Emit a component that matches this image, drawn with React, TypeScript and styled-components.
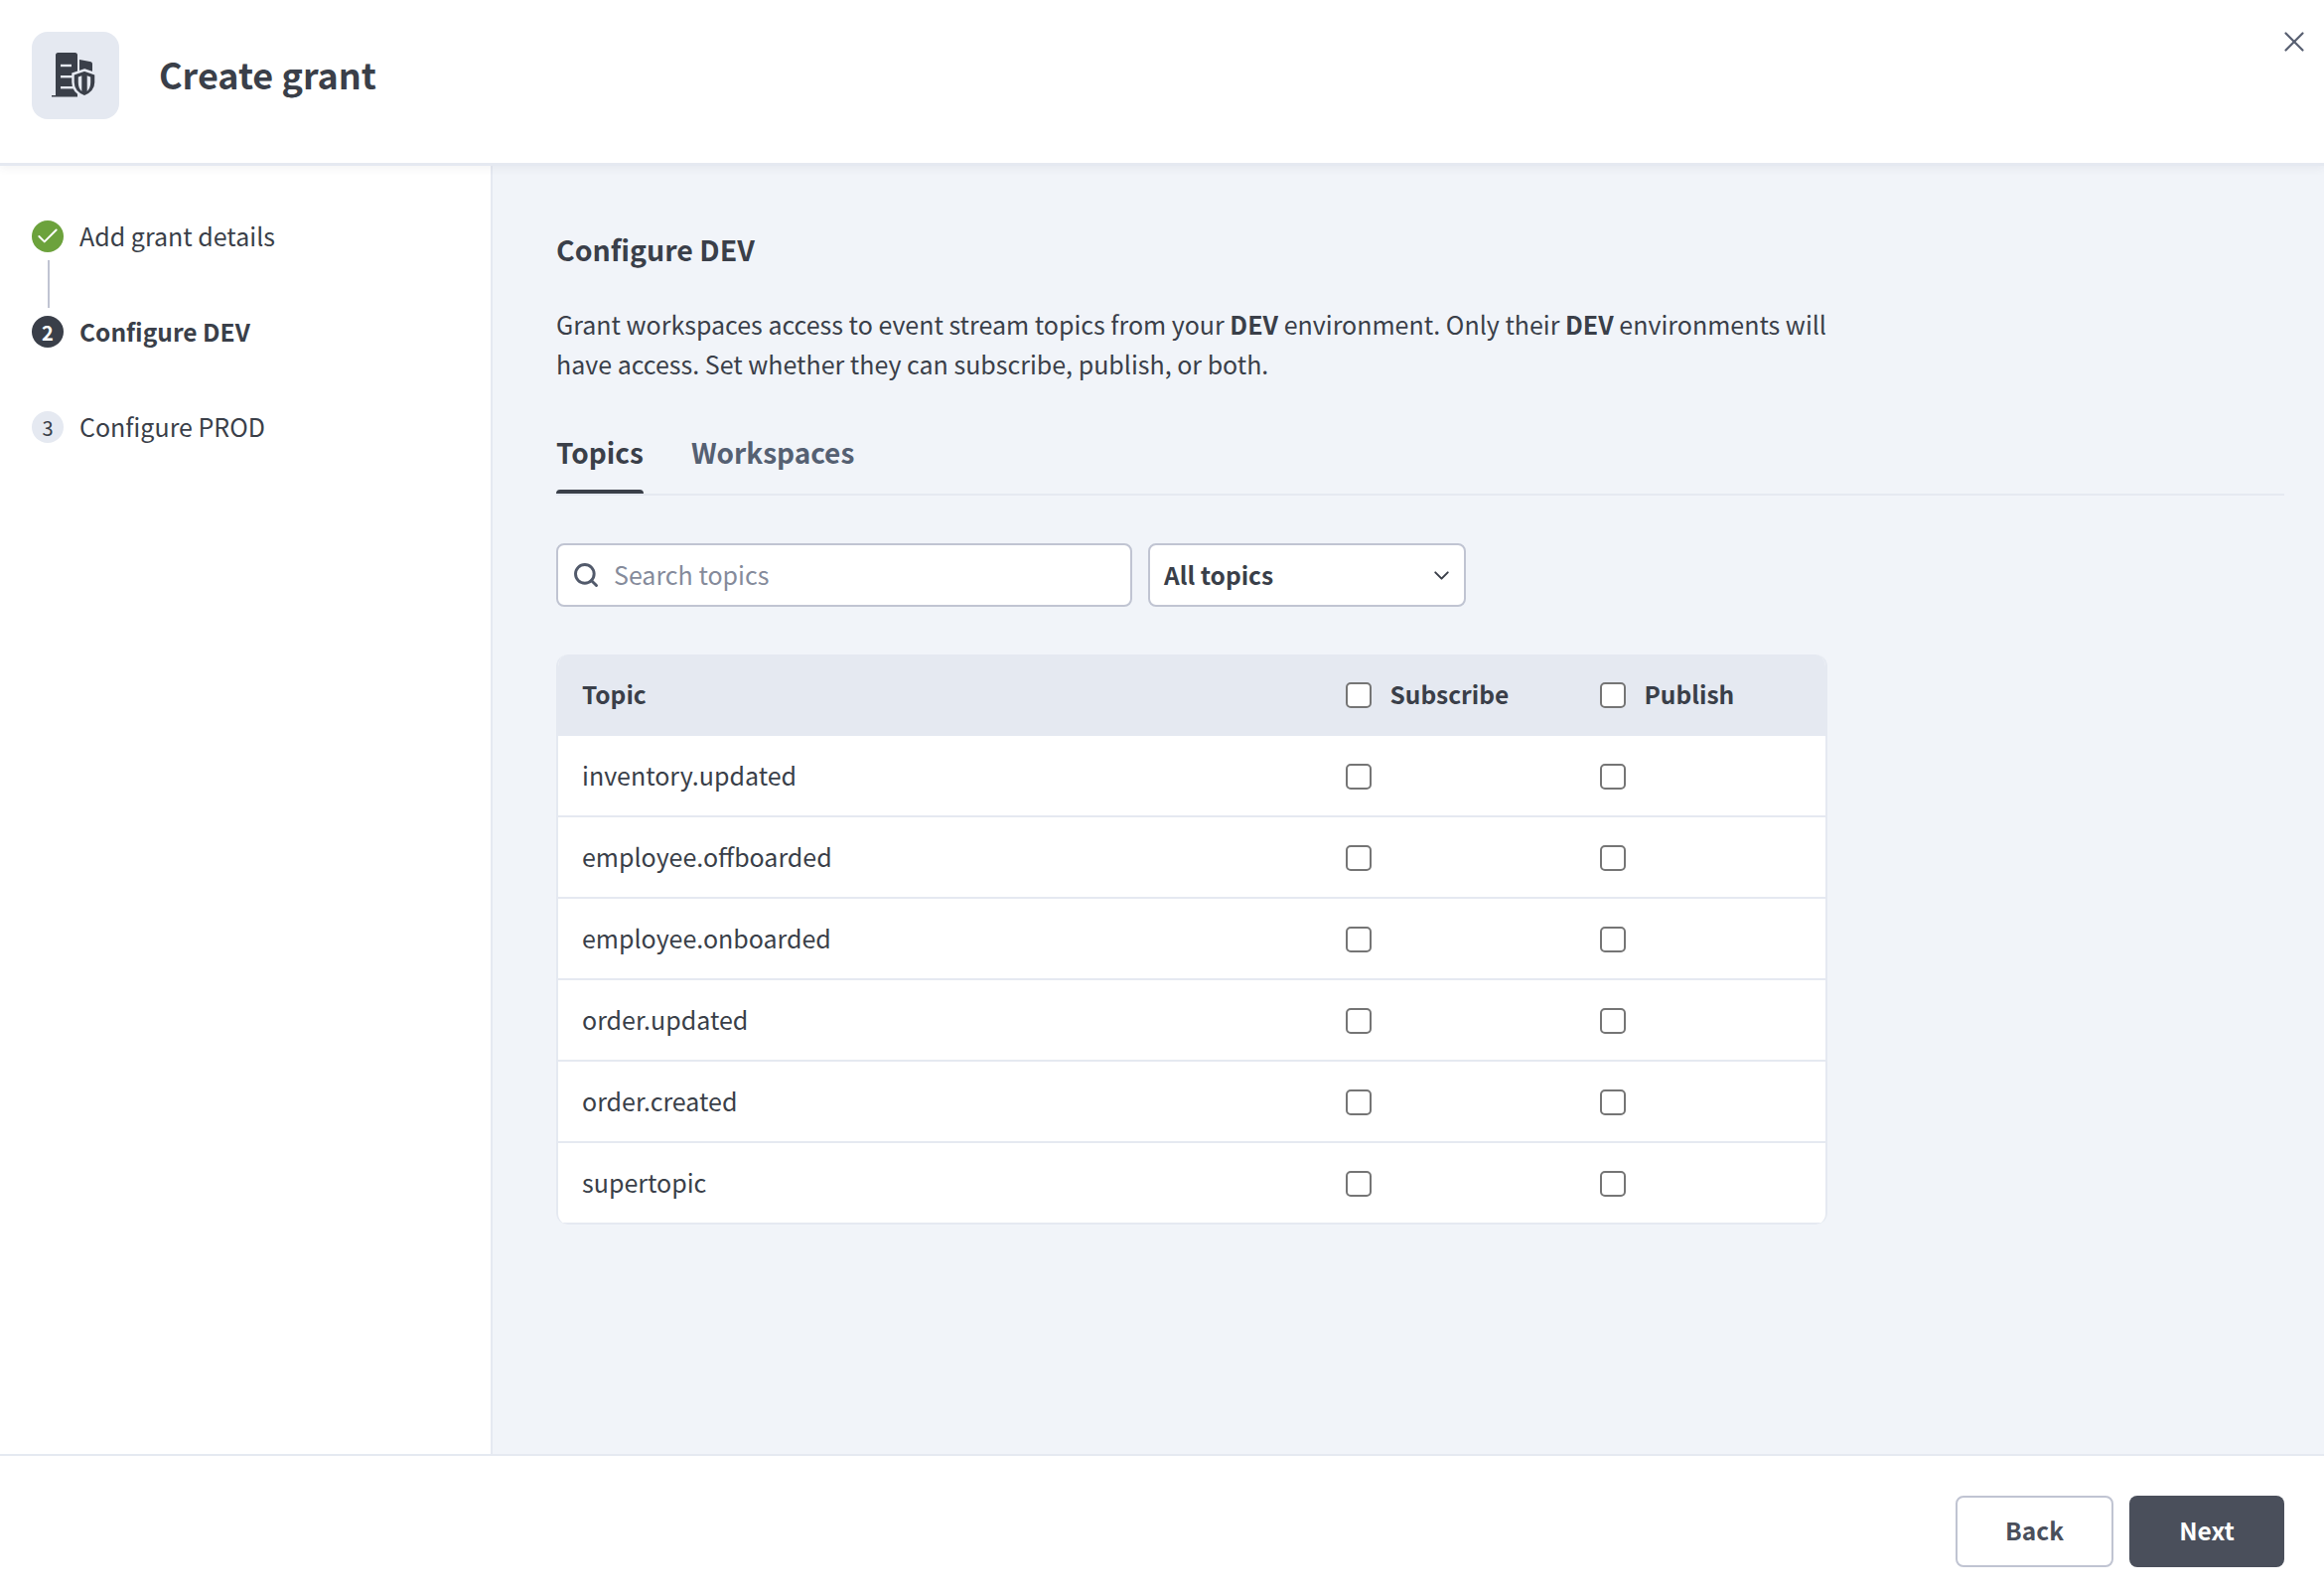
import { useState } from "react";
import styled, { createGlobalStyle } from "styled-components";
import { Check, ChevronDown, Search, X } from "lucide-react";

const GlobalStyle = createGlobalStyle`
  html, body {
    margin: 0;
    height: 100%;
    background: #ffffff;
  }
  body {
    font-family: "Noto Sans CJK SC", "Noto Sans", sans-serif;
    color: #3a3f49;
  }
  * {
    box-sizing: border-box;
  }
`;

const Page = styled.div`
  display: flex;
  flex-direction: column;
  height: 100vh;
  overflow: hidden;
`;
const Header = styled.header`
  position: relative;
  z-index: 1;
  flex: none;
  display: flex;
  align-items: center;
  gap: 40px;
  height: 167px;
  padding: 0 32px 12px;
  border-bottom: 3px solid #e5e9f1;
  box-shadow: 0 3px 8px rgba(60, 70, 90, 0.06);
`;
const IconBox = styled.div`
  display: flex;
  align-items: center;
  justify-content: center;
  width: 88px;
  height: 88px;
  border-radius: 16px;
  background: #e5e9f1;
`;
const Title = styled.h1`
  margin: 0;
  padding-bottom: 5px;
  font-size: 36px;
  line-height: 56px;
  font-weight: 700;
`;
const CloseButton = styled.button`
  position: absolute;
  top: 25px;
  right: 13px;
  display: flex;
  padding: 0;
  border: 0;
  background: none;
  color: #596072;
`;
const Body = styled.div`
  flex: 1;
  display: flex;
  min-height: 0;
`;
const Sidebar = styled.nav`
  flex: none;
  display: flex;
  flex-direction: column;
  width: 496px;
  padding: 55px 32px 0;
  border-right: 2px solid #e5e9f1;
`;
const Step = styled.div`
  display: flex;
  align-items: center;
  gap: 16px;
  height: 32px;
`;
const StepCircle = styled.span<{ $state: "done" | "active" | "todo" }>`
  flex: none;
  display: flex;
  align-items: center;
  justify-content: center;
  width: 32px;
  height: 32px;
  border-radius: 50%;
  font-size: 20px;
  font-weight: ${(p) => (p.$state === "active" ? 700 : 400)};
  background: ${(p) =>
    p.$state === "done" ? "#6ca23c" : p.$state === "active" ? "#3a3f49" : "#e5e9f1"};
  color: ${(p) => (p.$state === "todo" ? "#3a3f49" : "#ffffff")};
`;
const StepLabel = styled.span<{ $active?: boolean }>`
  padding-bottom: 2px;
  font-size: ${(p) => (p.$active ? "24.500px" : "25px")};
  font-weight: ${(p) => (p.$active ? 700 : 400)};
`;
const StepGap = styled.div<{ $line?: boolean }>`
  width: 2px;
  height: 48px;
  margin: 8px 0 8px 16px;
  background: ${(p) => (p.$line ? "#c0c4d2" : "transparent")};
`;
const Content = styled.main`
  flex: 1;
  min-width: 0;
  padding: 63px 40px 0 64px;
  background: #f1f4f9;
`;
const Heading = styled.h2`
  margin: 0;
  font-size: 28.500px;
  line-height: 42px;
  font-weight: 700;
`;
const Intro = styled.p`
  width: 1290px;
  margin: 34px 0 0;
  font-size: 25px;
  line-height: 40px;
`;
const Tabs = styled.div`
  display: flex;
  gap: 48px;
  margin-top: 44px;
  border-bottom: 2px solid #e5e9f1;
`;
const Tab = styled.button<{ $active?: boolean }>`
  position: relative;
  height: 67px;
  padding: 0 0 18px;
  border: 0;
  background: none;
  font-family: inherit;
  font-size: 28px;
  font-weight: 700;
  color: ${(p) => (p.$active ? "#3a3f49" : "#556072")};
  &::after {
    content: "";
    position: absolute;
    left: 0;
    right: 0;
    bottom: 0;
    height: 4px;
    border-radius: 4px 4px 0 0;
    background: ${(p) => (p.$active ? "#3a3f49" : "transparent")};
  }
`;
const Filters = styled.div`
  display: flex;
  gap: 16px;
  margin-top: 48px;
`;
const SearchBox = styled.label`
  display: flex;
  align-items: center;
  gap: 14px;
  width: 580px;
  height: 64px;
  padding: 0 14px;
  border: 2px solid #c0c4d2;
  border-radius: 8px;
  background: #ffffff;
  color: #525a6b;
`;
const SearchInput = styled.input`
  flex: 1;
  min-width: 0;
  padding: 0 0 2px;
  border: 0;
  outline: 0;
  background: none;
  font-family: inherit;
  font-size: 25px;
  color: #3a3f49;
  &::placeholder {
    color: #858b9b;
    opacity: 1;
  }
`;
const Select = styled.div`
  display: flex;
  align-items: center;
  justify-content: space-between;
  width: 320px;
  height: 64px;
  padding: 0 10px 0 14px;
  border: 2px solid #c0c4d2;
  border-radius: 8px;
  background: #ffffff;
  font-size: 24.500px;
  font-weight: 700;
`;
const SelectValue = styled.span`
  padding-bottom: 2px;
`;
const Table = styled.div`
  width: 1280px;
  margin-top: 48px;
  border-radius: 12px;
  overflow: hidden;
  background: #ffffff;
  border: 2px solid #e5e9f1;
  border-top: 0;
  border-bottom: 0;
`;
const Row = styled.div<{ $head?: boolean }>`
  display: grid;
  grid-template-columns: 769px 256px 1fr;
  align-items: center;
  height: 82px;
  padding-left: 24px;
  font-size: ${(p) => (p.$head ? "24.500px" : "25px")};
  font-weight: ${(p) => (p.$head ? 700 : 400)};
  background: ${(p) => (p.$head ? "#e5e9f1" : "#ffffff")};
  box-shadow: ${(p) => (p.$head ? "none" : "inset 0 -2px 0 #e5e9f1")};
`;
const CellText = styled.span<{ $body?: boolean }>`
  padding-bottom: ${(p) => (p.$body ? "4px" : "3px")};
`;
const CheckCell = styled.label`
  display: flex;
  align-items: center;
  gap: 18.500px;
`;
const Box = styled.input.attrs({ type: "checkbox" })`
  appearance: none;
  flex: none;
  width: 26px;
  height: 26px;
  margin: 0;
  border: 2px solid #757575;
  border-radius: 5px;
  background: #ffffff;
`;
const Footer = styled.footer`
  flex: none;
  display: flex;
  justify-content: flex-end;
  gap: 16px;
  height: 140px;
  padding: 40px 40px 0;
  border-top: 2px solid #e5e9f1;
`;
const Button = styled.button<{ $primary?: boolean }>`
  width: ${(p) => (p.$primary ? "156px" : "159px")};
  height: 72px;
  padding: 0 0 3px;
  border: ${(p) => (p.$primary ? "0" : "2px solid #c0c4d2")};
  border-radius: 8px;
  background: ${(p) => (p.$primary ? "#4a4f5b" : "#ffffff")};
  color: ${(p) => (p.$primary ? "#ffffff" : "#4a4f5b")};
  font-family: inherit;
  font-size: 24.500px;
  font-weight: 700;
`;

const GrantIcon = () => (
  <svg width="48" height="48" viewBox="0 0 48 48" fill="none" aria-hidden="true">
    <path d="M4 44V3.500A2.500 2.500 0 0 1 6.500 1H23.500A2.500 2.500 0 0 1 26 3.500V45.500H0V44Z" fill="#3a3f49" />
    <path d="M28 8l10.500 2A2.500 2.500 0 0 1 41 12.500V26H28Z" fill="#3a3f49" />
    <rect x="9" y="12.800" width="11" height="2.400" fill="#e5e9f1" />
    <rect x="9" y="24" width="14" height="2.400" fill="#e5e9f1" />
    <rect x="9" y="35" width="14" height="2.400" fill="#e5e9f1" />
    <path
      d="M33 18.500L44.500 22.500V31C44.500 38 39 43 33 45.500C27 43 21.500 38 21.500 31V22.500Z"
      fill="#3a3f49"
      stroke="#e5e9f1"
      strokeWidth="2.500"
    />
    <path d="M26.800 25.500V31C26.800 35 28 38 30.300 40V24.300ZM35.700 24.300V40C38 38 39.200 35 39.200 31V25.500Z" fill="#e5e9f1" />
  </svg>
);

const topics = [
  "inventory.updated",
  "employee.offboarded",
  "employee.onboarded",
  "order.updated",
  "order.created",
  "supertopic",
];

export default function App() {
  const [query, setQuery] = useState("");
  return (
    <Page>
      <GlobalStyle />
      <Header>
        <IconBox>
          <GrantIcon />
        </IconBox>
        <Title>Create grant</Title>
        <CloseButton aria-label="Close">
          <X size={34} strokeWidth={1.6} />
        </CloseButton>
      </Header>
      <Body>
        <Sidebar>
          <Step>
            <StepCircle $state="done">
              <Check size={26} strokeWidth={1.8} />
            </StepCircle>
            <StepLabel>Add grant details</StepLabel>
          </Step>
          <StepGap $line />
          <Step>
            <StepCircle $state="active">2</StepCircle>
            <StepLabel $active>Configure DEV</StepLabel>
          </Step>
          <StepGap />
          <Step>
            <StepCircle $state="todo">3</StepCircle>
            <StepLabel>Configure PROD</StepLabel>
          </Step>
        </Sidebar>
        <Content>
          <Heading>Configure DEV</Heading>
          <Intro>
            Grant workspaces access to event stream topics from your <b>DEV</b> environment. Only
            their <b>DEV</b> environments will have access. Set whether they can subscribe, publish,
            or both.
          </Intro>
          <Tabs>
            <Tab $active>Topics</Tab>
            <Tab>Workspaces</Tab>
          </Tabs>
          <Filters>
            <SearchBox>
              <Search size={28} strokeWidth={2.5} />
              <SearchInput
                placeholder="Search topics"
                value={query}
                onChange={(e) => setQuery(e.target.value)}
              />
            </SearchBox>
            <Select>
              <SelectValue>All topics</SelectValue>
              <ChevronDown size={25} strokeWidth={1.9} />
            </Select>
          </Filters>
          <Table>
            <Row $head>
              <CellText>Topic</CellText>
              <CheckCell>
                <Box />
                <CellText>Subscribe</CellText>
              </CheckCell>
              <CheckCell>
                <Box />
                <CellText>Publish</CellText>
              </CheckCell>
            </Row>
            {topics.map((topic) => (
              <Row key={topic}>
                <CellText $body>{topic}</CellText>
                <CheckCell>
                  <Box />
                </CheckCell>
                <CheckCell>
                  <Box />
                </CheckCell>
              </Row>
            ))}
          </Table>
        </Content>
      </Body>
      <Footer>
        <Button>Back</Button>
        <Button $primary>Next</Button>
      </Footer>
    </Page>
  );
}
